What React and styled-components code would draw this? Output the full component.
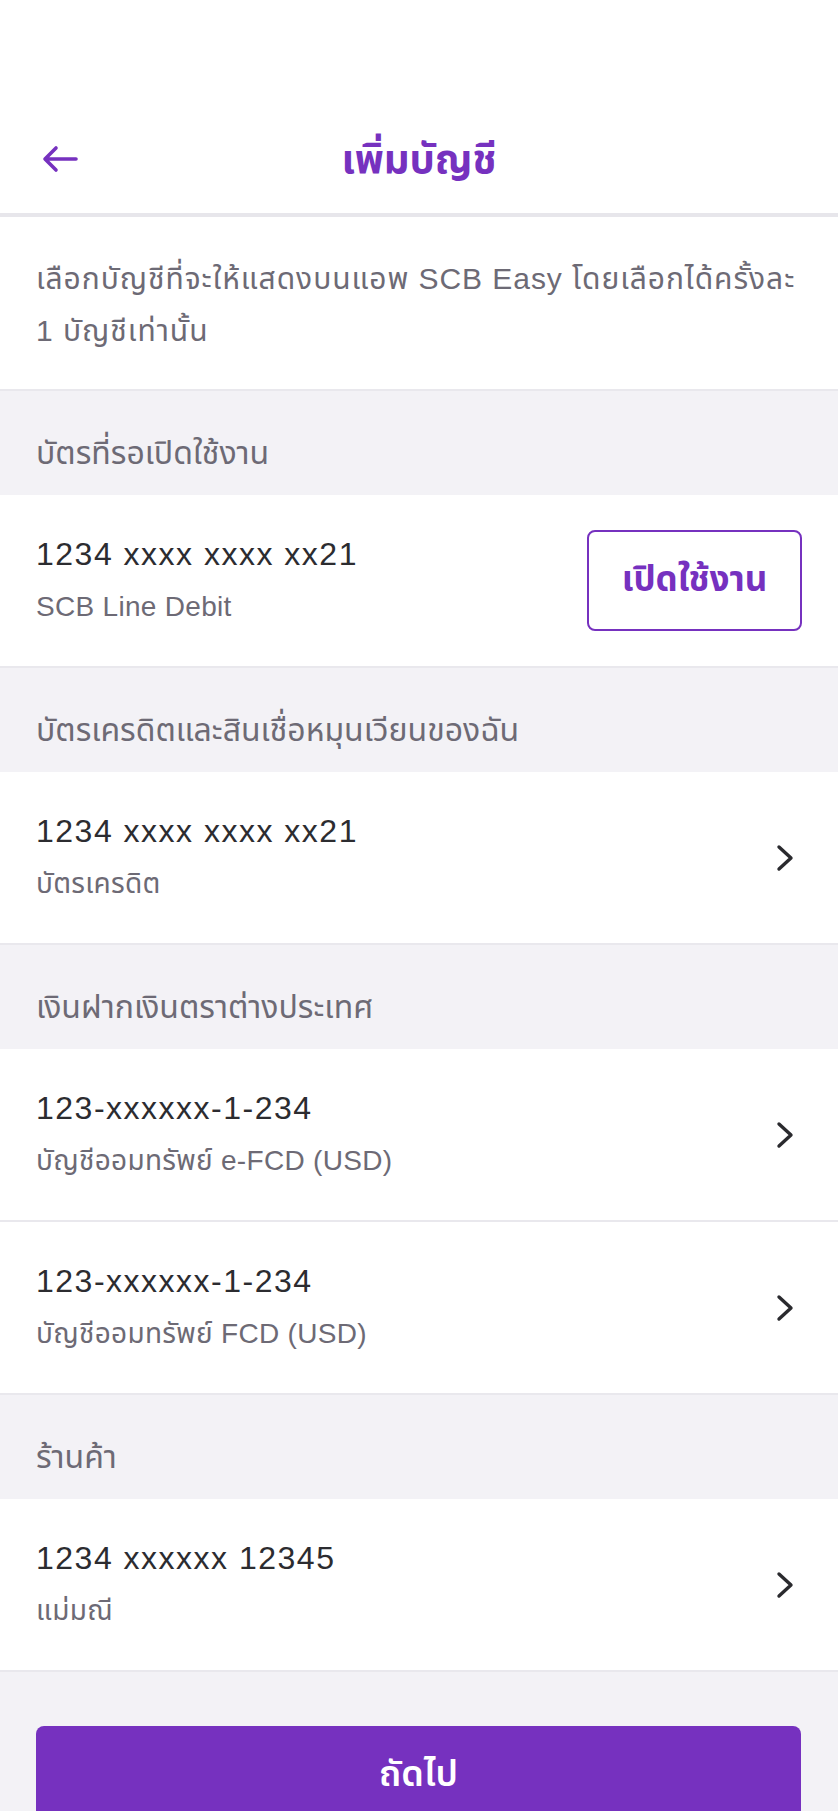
import React from "react";
import styled, { createGlobalStyle } from "styled-components";

const PURPLE = "#7631bf";

const GlobalStyle = createGlobalStyle`
  html, body {
    margin: 0;
    padding: 0;
    background: #ffffff;
  }
  body {
    font-family: "Liberation Sans", "Noto Sans", "Noto Sans Thai", "Loma", sans-serif;
    -webkit-font-smoothing: antialiased;
  }
`;

const sections = [
  {
    title: "บัตรเครดิตและสินเชื่อหมุนเวียนของฉัน",
    items: [{ number: "1234 xxxx xxxx xx21", name: "บัตรเครดิต" }],
  },
  {
    title: "เงินฝากเงินตราต่างประเทศ",
    items: [
      { number: "123-xxxxxx-1-234", name: "บัญชีออมทรัพย์ e-FCD (USD)" },
      { number: "123-xxxxxx-1-234", name: "บัญชีออมทรัพย์ FCD (USD)" },
    ],
  },
  {
    title: "ร้านค้า",
    items: [{ number: "1234 xxxxxx 12345", name: "แม่มณี" }],
  },
];

function App() {
  return (
    <Page>
      <GlobalStyle />
      <Header>
        <BackButton aria-label="back">
          <svg width="36" height="28" viewBox="0 0 36 28" fill="none">
            <path
              d="M34 14H4M14 3L3 14L14 25"
              stroke={PURPLE}
              strokeWidth="3.6"
              strokeLinecap="round"
              strokeLinejoin="round"
            />
          </svg>
        </BackButton>
        <Title>เพิ่มบัญชี</Title>
      </Header>

      <Description>
        เลือกบัญชีที่จะให้แสดงบนแอพ SCB Easy โดยเลือกได้ครั้งละ
        <br />1 บัญชีเท่านั้น
      </Description>

      <SectionTitle>บัตรที่รอเปิดใช้งาน</SectionTitle>
      <Row>
        <Info>
          <Number>1234 xxxx xxxx xx21</Number>
          <Name>SCB Line Debit</Name>
        </Info>
        <OutlineButton>เปิดใช้งาน</OutlineButton>
      </Row>

      {sections.map((section) => (
        <React.Fragment key={section.title}>
          <SectionTitle>{section.title}</SectionTitle>
          {section.items.map((item, i) => (
            <Row key={i}>
              <Info>
                <Number>{item.number}</Number>
                <Name>{item.name}</Name>
              </Info>
              <Chevron width="22" height="30" viewBox="0 0 22 30" fill="none">
                <path
                  d="M5 4L17 15L5 26"
                  stroke="#2a2a2e"
                  strokeWidth="3.4"
                  strokeLinecap="round"
                  strokeLinejoin="round"
                />
              </Chevron>
            </Row>
          ))}
        </React.Fragment>
      ))}

      <Footer>
        <PrimaryButton>ถัดไป</PrimaryButton>
      </Footer>
    </Page>
  );
}

const Page = styled.div`
  width: 838px;
  height: 1811px;
  overflow: hidden;
  display: flex;
  flex-direction: column;
  background: #f3f2f6;
`;

const Header = styled.div`
  flex-shrink: 0;
  height: 217px;
  box-sizing: border-box;
  padding: 105px 0 0 0;
  display: grid;
  grid-template-columns: 1fr auto 1fr;
  grid-template-rows: 108px;
  align-items: center;
  background: #ffffff;
  border-bottom: 4px solid #e7e6eb;
`;

const BackButton = styled.button`
  justify-self: start;
  margin-left: 42px;
  border: none;
  background: none;
  padding: 0;
  display: flex;
`;

const Title = styled.div`
  color: ${PURPLE};
  font-size: 40px;
  font-weight: bold;
  line-height: 56px;
`;

const Description = styled.div`
  flex-shrink: 0;
  background: #ffffff;
  color: #6d6a75;
  font-size: 30px;
  letter-spacing: 0.95px;
  line-height: 52px;
  padding: 36px 36px 32px 36px;
  border-bottom: 2px solid #e9e8ed;
`;

const SectionTitle = styled.div`
  flex-shrink: 0;
  height: 104px;
  box-sizing: border-box;
  padding: 42px 36px 0 36px;
  background: #f3f2f6;
  color: #6d6a75;
  font-size: 32px;
  line-height: 40px;
`;

const Row = styled.div`
  flex-shrink: 0;
  height: 173px;
  box-sizing: border-box;
  padding: 0 36px 0 36px;
  background: #ffffff;
  display: flex;
  align-items: center;
  justify-content: space-between;
  border-bottom: 2px solid #e9e8ed;
`;

const Info = styled.div`
  display: flex;
  flex-direction: column;
  gap: 16px;
  padding-bottom: 1px;
`;

const Number = styled.div`
  color: #2c2c30;
  font-size: 32px;
  letter-spacing: 1.5px;
  line-height: 38px;
`;

const Name = styled.div`
  color: #6d6a75;
  font-size: 28px;
  letter-spacing: 0.3px;
  line-height: 36px;
`;

const OutlineButton = styled.button`
  width: 215px;
  height: 101px;
  box-sizing: border-box;
  border: 2px solid ${PURPLE};
  border-radius: 8px;
  background: #ffffff;
  color: ${PURPLE};
  font-family: inherit;
  font-size: 35px;
  font-weight: bold;
  padding: 0;
`;

const Chevron = styled.svg`
  margin-right: 6px;
`;

const Footer = styled.div`
  flex: 1;
  background: #f3f2f6;
  padding: 54px 37px 0 36px;
`;

const PrimaryButton = styled.button`
  display: block;
  width: 100%;
  border: none;
  border-radius: 8px;
  background: ${PURPLE};
  color: #ffffff;
  font-family: inherit;
  font-size: 36px;
  font-weight: 600;
  line-height: 56px;
  padding: 20px 0 60px 0;
`;

export default App;
